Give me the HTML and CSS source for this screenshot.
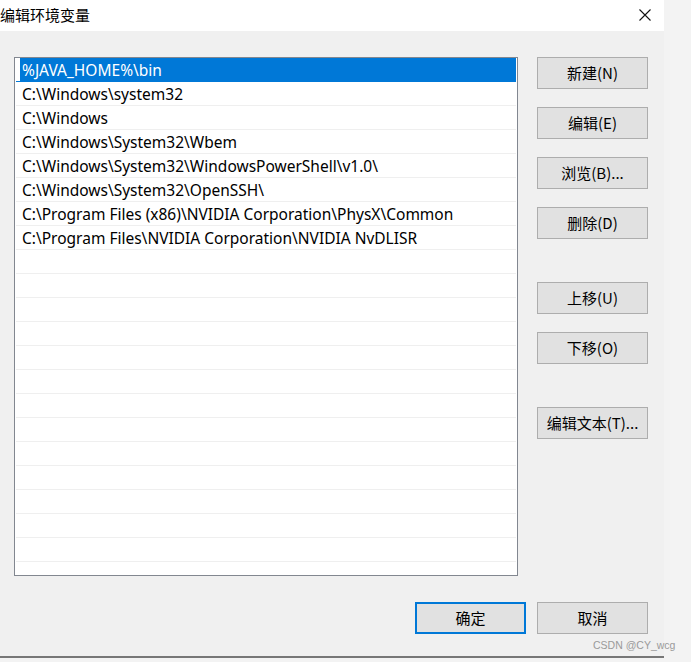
FILE: index.html
```html
<!DOCTYPE html>
<html lang="zh-CN">
<head>
<meta charset="utf-8">
<title>编辑环境变量</title>
<link rel="stylesheet" href="styles.css">
</head>
<body>
<div class="page">
  <div class="window">
    <div class="titlebar">
      <span class="title">编辑环境变量</span>
      <svg class="close" width="12" height="12" viewBox="0 0 12 12" aria-hidden="true">
        <path d="M0.5 0.5 L11.5 11.5 M11.5 0.5 L0.5 11.5" stroke="#111" stroke-width="1.1" fill="none"/>
      </svg>
    </div>
    <div class="content">
      <div class="main">
        <div class="listbox">
          <div class="row selected">%JAVA_HOME%\bin</div>
          <div class="row">C:\Windows\system32</div>
          <div class="row">C:\Windows</div>
          <div class="row">C:\Windows\System32\Wbem</div>
          <div class="row">C:\Windows\System32\WindowsPowerShell\v1.0\</div>
          <div class="row">C:\Windows\System32\OpenSSH\</div>
          <div class="row">C:\Program Files (x86)\NVIDIA Corporation\PhysX\Common</div>
          <div class="row">C:\Program Files\NVIDIA Corporation\NVIDIA NvDLISR</div>
          <div class="row"></div>
          <div class="row"></div>
          <div class="row"></div>
          <div class="row"></div>
          <div class="row"></div>
          <div class="row"></div>
          <div class="row"></div>
          <div class="row"></div>
          <div class="row"></div>
          <div class="row"></div>
          <div class="row"></div>
          <div class="row"></div>
          <div class="row"></div>
          <div class="row"></div>
        </div>
        <div class="side">
          <button class="btn">新建(N)</button>
          <button class="btn">编辑(E)</button>
          <button class="btn">浏览(B)...</button>
          <button class="btn">删除(D)</button>
          <button class="btn group">上移(U)</button>
          <button class="btn">下移(O)</button>
          <button class="btn group">编辑文本(T)...</button>
        </div>
      </div>
      <div class="footer">
        <button class="btn primary">确定</button>
        <button class="btn">取消</button>
      </div>
    </div>
  </div>
  <div class="watermark">CSDN @CY_wcg</div>
</div>
</body>
</html>
```
FILE: styles.css
```css
* { box-sizing: border-box; }
html, body {
  margin: 0;
  padding: 0;
  background: #f3f3f3;
}
body {
  font-family: "Noto Sans", "Noto Sans CJK SC", sans-serif;
  font-size: 15px;
  color: #000;
}
.page {
  position: relative;
  width: 691px;
  height: 662px;
  overflow: hidden;
}
.window {
  width: 664px;
  border-bottom: 2px solid #777;
}
.titlebar {
  height: 31px;
  background: #fff;
  display: flex;
  align-items: center;
  justify-content: space-between;
  padding: 0 13px 2px 0;
}
.title {
  font-family: "Noto Sans CJK SC", sans-serif;
  font-size: 15px;
  line-height: 20px;
}
.close { display: block; margin-top: 1px; }
.content {
  background: #f0f0f0;
  height: 625px;
  padding-top: 26px;
}
.main {
  display: flex;
  align-items: flex-start;
}
.listbox {
  margin-left: 14px;
  width: 504px;
  height: 519px;
  border: 1px solid #828790;
  background: #fff;
  padding: 0 1px 0 1px;
  overflow: hidden;
}
.row {
  height: 24px;
  border-bottom: 1px solid #efefef;
  padding: 1px 0 0 6px;
  line-height: 22px;
  white-space: nowrap;
  font-size: 15.5px;
}
.row.selected {
  background: linear-gradient(to right, transparent 4px, #0078d7 4px);
  color: #fff;
  border-bottom-color: #0078d7;
}
.side {
  margin-left: 19px;
  display: flex;
  flex-direction: column;
  gap: 18px;
}
.btn {
  width: 111px;
  height: 32px;
  border: 1px solid #adadad;
  background: #e1e1e1;
  font-family: "Noto Sans CJK SC", sans-serif;
  font-size: 15px;
  color: #000;
  padding: 0;
  margin: 0;
  line-height: 20px;
}
.btn.group { margin-top: 25px; }
.btn.primary { border: 2px solid #0078d7; }
.footer {
  display: flex;
  justify-content: flex-end;
  gap: 11px;
  padding-right: 16px;
  margin-top: 26px;
}
.watermark {
  position: absolute;
  left: 593px;
  top: 639px;
  font-family: "Liberation Sans", sans-serif;
  font-size: 10.5px;
  color: #9a9a9a;
}
```
